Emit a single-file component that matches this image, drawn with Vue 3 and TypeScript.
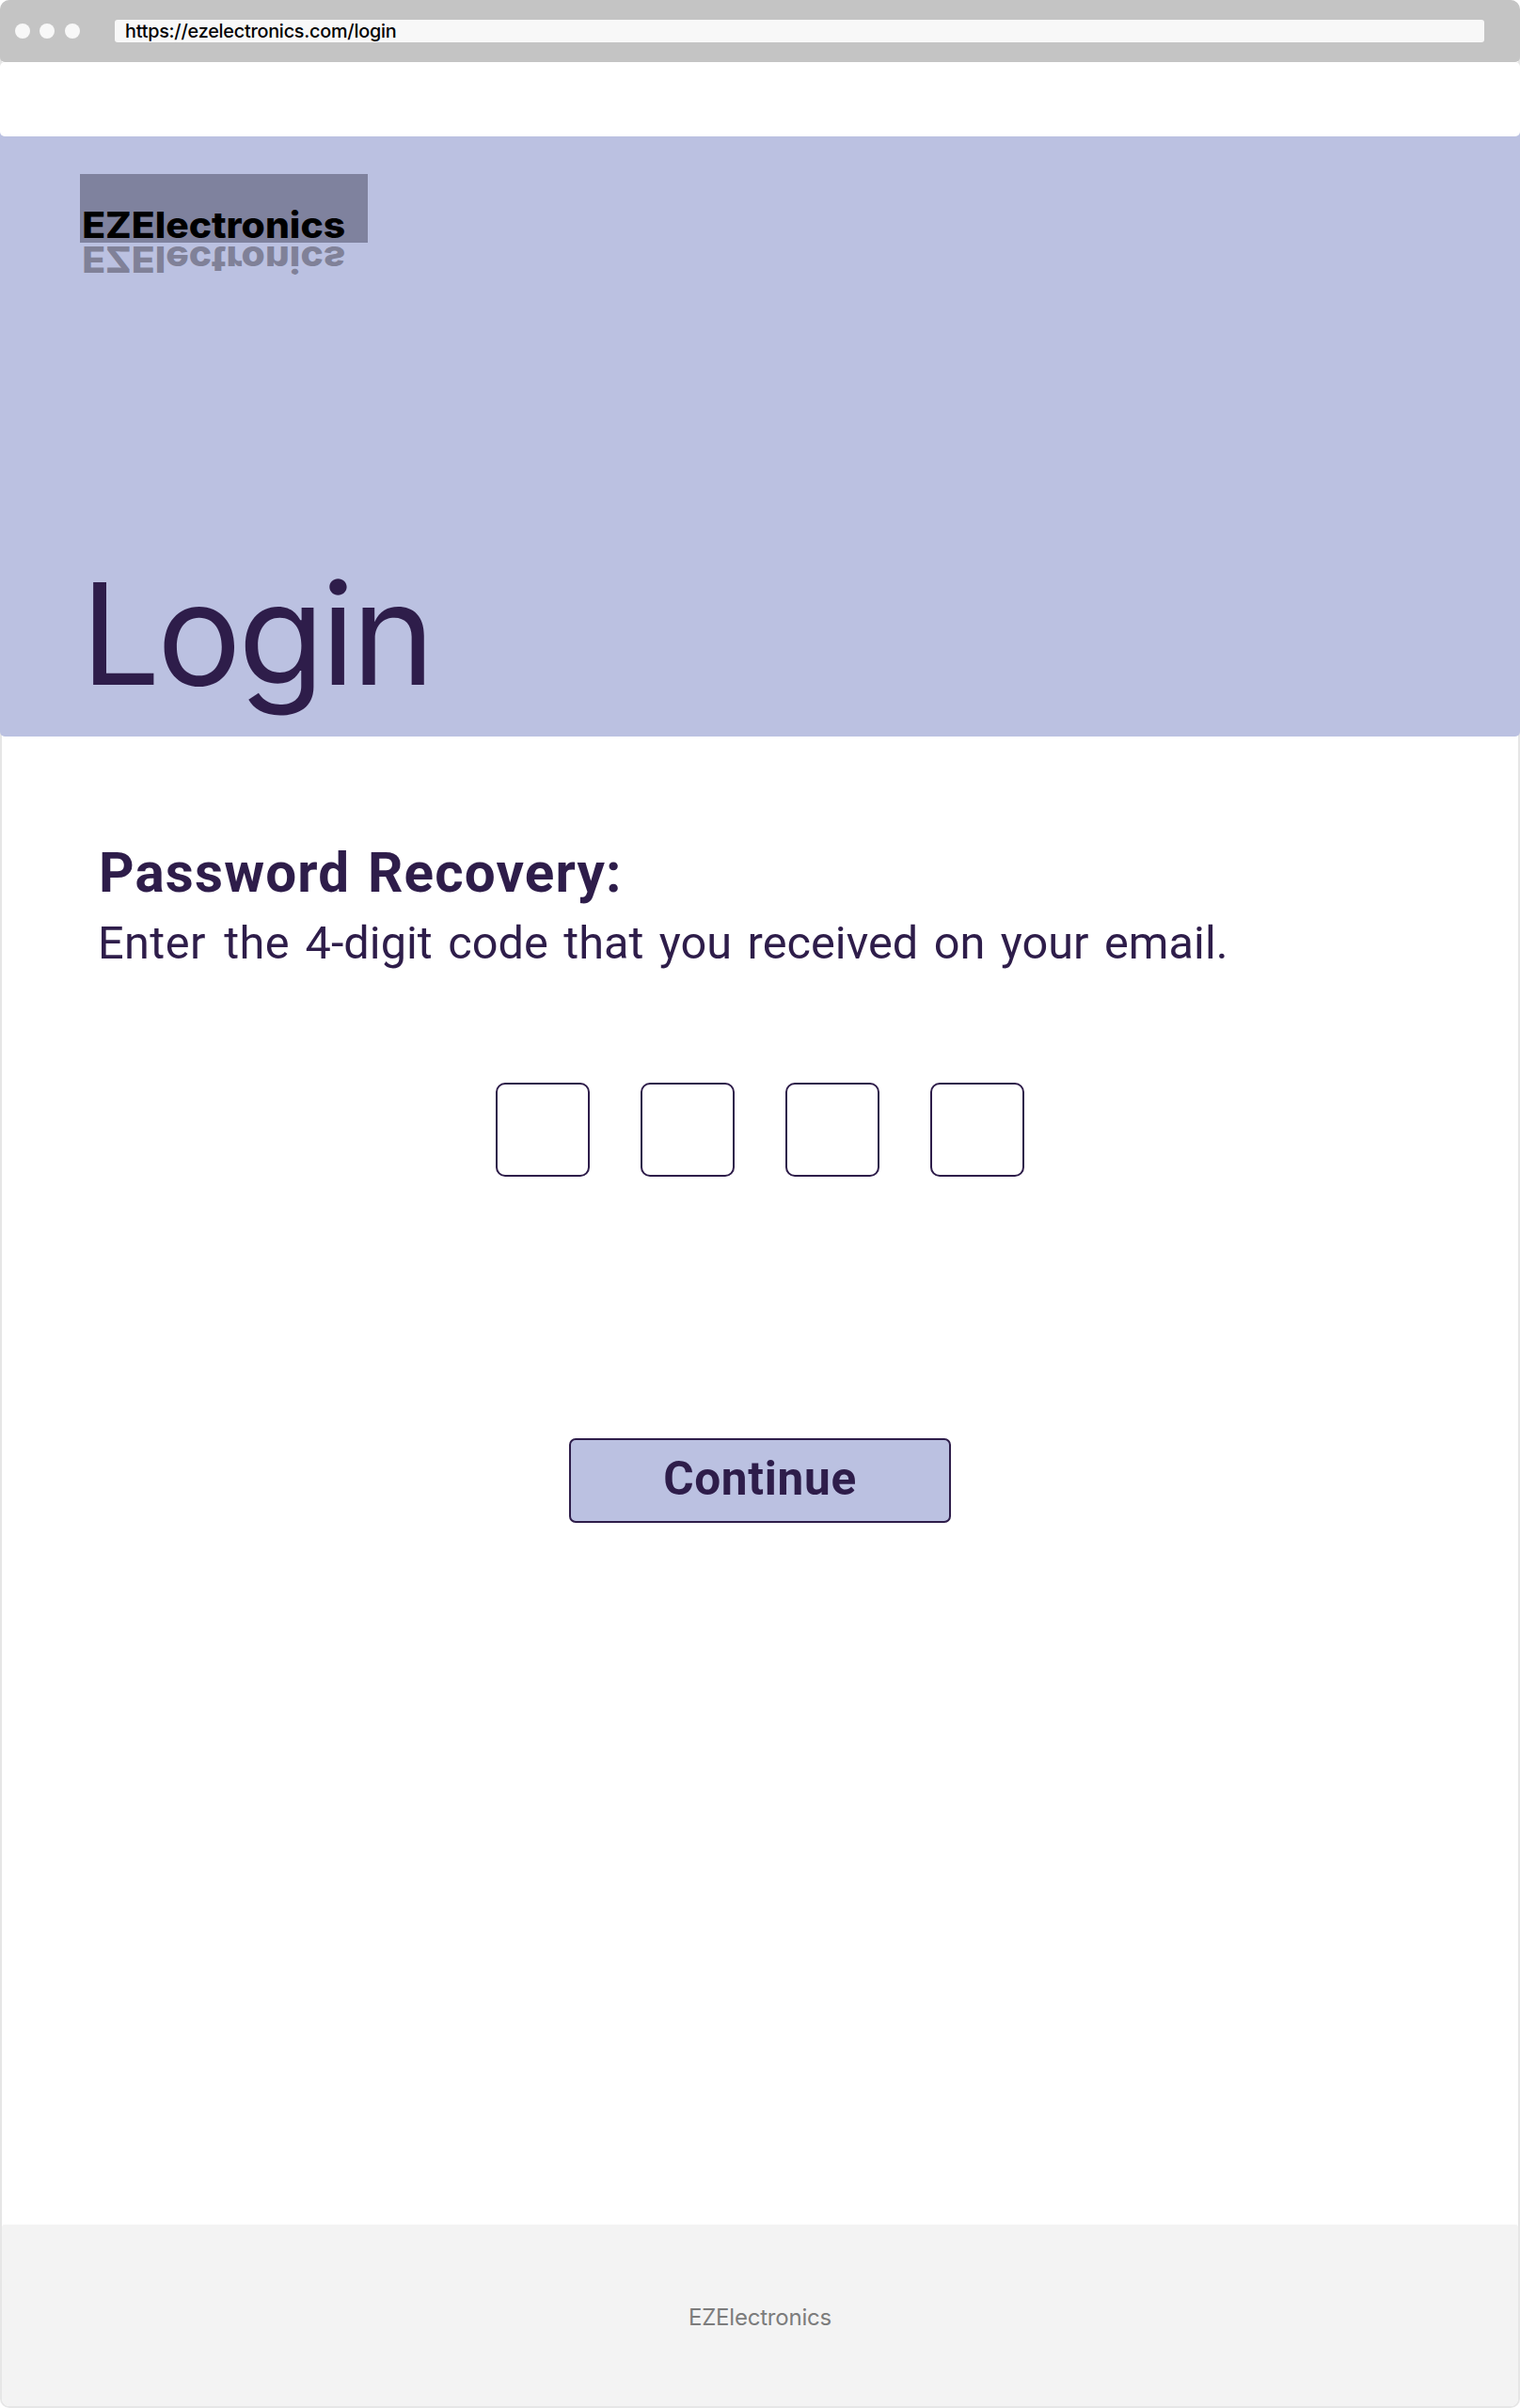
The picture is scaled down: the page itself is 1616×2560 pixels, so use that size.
<script setup lang="ts">
import { ref } from 'vue'

const url = 'https://ezelectronics.com/login'
const brand = 'EZElectronics'
const code = ref<string[]>(['', '', '', ''])
</script>

<template>
  <div class="window">
    <header class="browser-bar">
      <div class="dots"><i v-for="n in 3" :key="n" class="dot"></i></div>
      <div class="address">{{ url }}</div>
    </header>
    <div class="nav-wrap"><nav class="nav"></nav></div>

    <section class="hero">
      <div class="brand">
        <div class="brand-box"><span class="wordmark">{{ brand }}</span></div>
        <span class="wordmark reflection" aria-hidden="true">{{ brand }}</span>
      </div>
      <h1 class="title"><span class="title-initial">L</span>ogin</h1>
    </section>

    <main class="content">
      <h2 class="heading">Password Recovery:</h2>
      <p class="hint"><span class="lead">Enter the</span> 4-digit code that you received on your email.</p>
      <div class="code">
        <input v-for="(_, i) in code" :key="i" v-model="code[i]" class="digit" maxlength="1" inputmode="numeric" />
      </div>
      <button type="button" class="continue">Continue</button>
    </main>

    <footer class="footer">{{ brand }}</footer>
  </div>
</template>

<style>
body {
  margin: 0;
  background: #fff;
}
</style>

<style scoped>
.window {
  box-sizing: border-box;
  display: flex;
  flex-direction: column;
  width: 1616px;
  height: 2560px;
  overflow: hidden;
  border-radius: 10px;
  background: #fff;
  box-shadow: inset 0 0 0 2px #e6e6e6;
  font-family: Inter, "Liberation Sans", sans-serif;
  color: #2e1d4a;
}
.browser-bar {
  display: flex;
  align-items: center;
  height: 66px;
  box-sizing: border-box;
  padding: 0 38px 0 16px;
  border-radius: 5px;
  background: #c4c4c4;
}
.dots {
  display: flex;
  gap: 10px;
  width: 106px;
  flex: none;
}
.dot {
  width: 16px;
  height: 16px;
  border-radius: 50%;
  background: #f8f8f8;
}
.dot:last-child {
  margin-left: 1px;
}
.address {
  flex: 1;
  height: 24px;
  padding-left: 11px;
  border-radius: 3px;
  background: #f8f8f8;
  color: #000;
  font-size: 19.8px;
  font-weight: 450;
  line-height: 24px;
  letter-spacing: -0.22px;
}
.nav-wrap {
  height: 79px;
  background: linear-gradient(#e6e6e6 50%, #bbc1e1 50%);
}
.nav {
  height: 79px;
  border-radius: 5px;
  background: #fff;
}
.hero {
  box-sizing: border-box;
  display: flex;
  flex-direction: column;
  justify-content: space-between;
  height: 638px;
  padding: 40px 85px 19px;
  border-radius: 0 0 5px 5px;
  background: #bbc1e1;
}
.brand-box {
  box-sizing: border-box;
  width: 306px;
  height: 73px;
  padding-top: 36px;
  background: #7f829e;
}
.wordmark {
  display: block;
  width: max-content;
  padding-left: 2px;
  color: #000;
  font-size: 38.3px;
  font-weight: 800;
  line-height: 36px;
  transform: scaleX(1.066);
  transform-origin: left center;
}
.reflection {
  color: #808198;
  transform: scale(1.066, -1);
}
.title {
  margin: 0 0 0 1px;
  font-size: 149.5px;
  font-weight: 400;
  line-height: 180px;
  letter-spacing: -3.5px;
}
.content {
  display: flex;
  flex: 1;
  flex-direction: column;
  padding: 110px 104px 0;
  font-family: Roboto, "Liberation Sans", sans-serif;
}
.heading {
  margin: 0 0 10px 1px;
  font-size: 58.4px;
  font-weight: 700;
  line-height: 70px;
  letter-spacing: 1.15px;
  word-spacing: 3px;
}
.hint {
  margin: 0;
  font-size: 48.7px;
  line-height: 60px;
  word-spacing: 4.4px;
}
.lead {
  letter-spacing: 0.4px;
  word-spacing: 7px;
}
.code {
  display: flex;
  justify-content: center;
  gap: 54px;
  margin-top: 118px;
}
.digit {
  box-sizing: border-box;
  width: 100px;
  height: 100px;
  padding: 0;
  border: 2px solid #2e1d4a;
  border-radius: 10px;
  background: transparent;
  color: inherit;
  font: 400 48px Roboto, sans-serif;
  text-align: center;
}
.continue {
  box-sizing: border-box;
  align-self: center;
  width: 406px;
  height: 90px;
  margin-top: 278px;
  padding: 0 0 3px;
  border: 2px solid #2e1d4a;
  border-radius: 7px;
  background: #bbc1e1;
  color: inherit;
  font: 700 49.5px/83px Roboto, "Liberation Sans", sans-serif;
  letter-spacing: 0.7px;
}
.footer {
  box-sizing: border-box;
  height: 193px;
  margin: 0 2px 2px;
  padding-top: 79px;
  border-radius: 3px 3px 8px 8px;
  background: #f3f3f3;
  color: #7c7c7c;
  font-size: 24px;
  line-height: 40px;
  letter-spacing: -0.21px;
  text-align: center;
}
</style>
